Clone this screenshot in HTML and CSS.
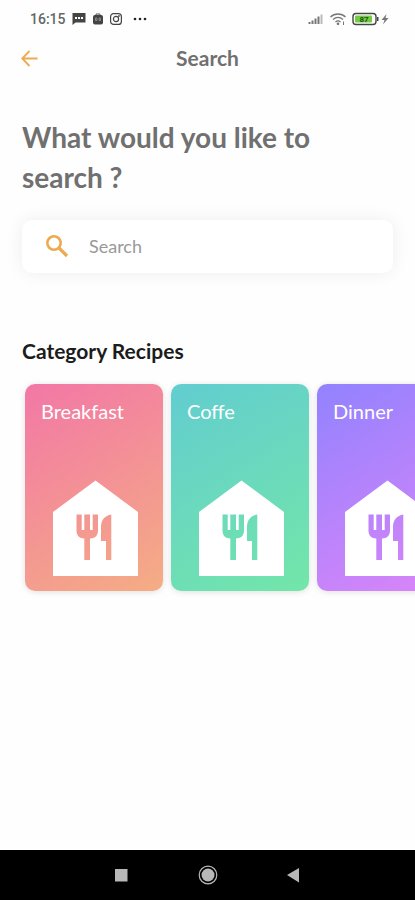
FILE: index.html
```html
<!DOCTYPE html>
<html lang="en">
<head>
<meta charset="utf-8">
<meta name="viewport" content="width=device-width, initial-scale=1">
<title>Search</title>
<link rel="stylesheet" href="styles.css">
</head>
<body>
<svg class="defs" aria-hidden="true">
  <symbol id="house" viewBox="0 0 85 96">
    <path fill="#fff" fill-rule="evenodd" d="M42.500 0.500L85 32V96H0V32ZM23.500 34.500V50.500C23.500 55.500 26.500 58.500 31.300 58.500V80H37V58.500C42 58.500 45 55.500 45 50.500V34.500H39.700V50H37V34.500H31.300V50H28.700V34.500ZM58.300 34.500C52 35.500 48 40 48 47V61H53V80H58.300Z"/>
  </symbol>
</svg>
<div class="status">
  <div class="status-group">
    <span class="time">16:15</span>
    <svg width="14" height="14" viewBox="0 0 14 14"><path fill="#444" d="M0.500 1H13.500V10.500H3.500L0.500 13Z"/><path fill="#fff" d="M3 5h2v2H3zM6 5h2v2H6zM9 5h2v2H9z"/></svg>
    <svg width="12" height="14" viewBox="0 0 12 14"><path d="M4 4V2H8V4" fill="none" stroke="#555"/><rect x="1" y="3" width="10" height="9.500" rx="2" fill="#444"/><path d="M3.500 6H5V8.500H3.500ZM7 6H8.500V8.500H7Z" fill="none" stroke="#999" stroke-width=".8"/></svg>
    <svg width="12" height="14" viewBox="0 0 12 14" fill="none" stroke="#444" stroke-width="1.200"><rect x="0.600" y="1.600" width="10.800" height="10.800" rx="3"/><circle cx="6" cy="7" r="2.600"/><circle cx="9" cy="4" r=".3"/></svg>
    <svg class="more" width="16" height="14" viewBox="0 0 16 14" fill="#222"><circle cx="3" cy="7" r="1.300"/><circle cx="8" cy="7" r="1.300"/><circle cx="13" cy="7" r="1.300"/></svg>
  </div>
  <div class="status-group">
    <svg width="16" height="14" viewBox="0 0 16 14" fill="#777"><path d="M0.500 10h2v2h-2zM3.500 8.500h2V12h-2zM6.500 6.500h2V12h-2zM9.500 4.500h2V12h-2z"/><path fill="#bbb" d="M12.500 2.500h2V12h-2z"/></svg>
    <svg width="16" height="14" viewBox="0 0 16 14" fill="none" stroke="#777" stroke-width="1.300"><path d="M0.500 5C4.500 1 11.500 1 15.500 5M3 7.500C6 4.800 10 4.800 13 7.500M5.500 10C7 8.700 9 8.700 10.500 10"/><circle cx="8" cy="11.800" r=".7"/><path d="M13.500 9.500V13" stroke-width="1"/></svg>
    <svg width="27" height="14" viewBox="0 0 27 14"><rect x="1" y="1.500" width="23" height="11" rx="3" fill="#fff" stroke="#444" stroke-width="1.400"/><rect x="3" y="3.500" width="17" height="7" rx="1" fill="#72cc42"/><path fill="#444" d="M25 5h1.500v4H25z"/><text class="charge" x="12" y="10" text-anchor="middle">87</text></svg>
    <svg class="bolt" width="8" height="14" viewBox="0 0 8 14"><path fill="#777" d="M5.500 2L0.500 8H3.500L2 12.500L7.500 6H4.500Z"/></svg>
  </div>
</div>
<header class="appbar">
  <button class="back" aria-label="Back"><svg width="17" height="18" viewBox="0 0 17 18" fill="none" stroke="#edaa50" stroke-width="1.800"><path d="M8.500 2L1.200 9.500L8.500 17M1.200 9.500H16.500"/></svg></button>
  <h2 class="title">Search</h2>
</header>
<main>
  <h1 class="question">What would you like to search ?</h1>
  <label class="search">
    <svg width="24" height="24" viewBox="0 0 24 24" fill="none" stroke="#edaa50" stroke-width="2.600"><circle cx="9" cy="9" r="6.700"/><path d="M14 14L22 22" stroke-width="3.200"/></svg>
    <input type="search" placeholder="Search" aria-label="Search">
  </label>
  <h2 class="section">Category Recipes</h2>
  <div class="cards">
    <a class="card breakfast" href="#breakfast"><span>Breakfast</span><svg class="house" aria-hidden="true"><use href="#house"/></svg></a>
    <a class="card coffee" href="#coffe"><span>Coffe</span><svg class="house" aria-hidden="true"><use href="#house"/></svg></a>
    <a class="card dinner" href="#dinner"><span>Dinner</span><svg class="house" aria-hidden="true"><use href="#house"/></svg></a>
  </div>
</main>
<nav class="system">
  <button aria-label="Recent apps"><svg width="20" height="20" viewBox="0 0 20 20"><rect x="4" y="4" width="12.500" height="12.500" fill="#b8b8b8"/></svg></button>
  <button aria-label="Home"><svg width="20" height="20" viewBox="0 0 20 20"><circle cx="10" cy="10" r="8.800" fill="none" stroke="#b8b8b8" stroke-width="1.200"/><circle cx="10" cy="10" r="6.500" fill="#b8b8b8"/></svg></button>
  <button aria-label="Go back"><svg width="20" height="20" viewBox="0 0 20 20"><path d="M15 3V17.500L3 10Z" fill="#b8b8b8"/></svg></button>
</nav>
</body>
</html>
```
FILE: styles.css
```css
* { box-sizing: border-box; }
body {
  margin: 0;
  min-height: 100vh;
  display: flex;
  flex-direction: column;
  background: #fefefe;
  color: #707070;
  font-family: Lato, "Liberation Sans", sans-serif;
  overflow-x: hidden;
}
h1, h2 { margin: 0; }
button { padding: 0; border: 0; background: none; display: flex; }
.defs { display: none; }
.status {
  height: 38px;
  padding: 0 26px 0 30px;
  display: flex;
  align-items: center;
  justify-content: space-between;
}
.status-group { display: flex; align-items: center; gap: 6px; }
.status-group svg { flex: none; }
.time { font: 500 14px/16px Roboto, sans-serif; color: #666; }
.more { margin-left: 4px; }
.bolt { margin-left: -4px; }
.charge { font: 700 8px Roboto, sans-serif; fill: #23501a; }
.appbar {
  height: 39px;
  padding: 0 21px;
  display: grid;
  grid-template-columns: 1fr auto 1fr;
  align-items: center;
}
.title { font-size: 21px; line-height: 24px; font-weight: 700; }
main { flex: 1; padding: 40px 0 24px; }
.question {
  padding: 0 22px;
  font-size: 28px;
  line-height: 40px;
  font-weight: 700;
}
.search {
  margin: 23px 22px 0;
  height: 53px;
  padding: 0 23px 2px;
  display: flex;
  align-items: center;
  gap: 20px;
  border-radius: 10px;
  background: #fff;
  box-shadow: 0 0 18px rgba(0, 0, 0, 0.07);
}
.search svg { flex: none; }
.search input {
  flex: 1;
  min-width: 0;
  padding: 0;
  border: 0;
  outline: 0;
  background: none;
  font: 400 18px/24px Lato, sans-serif;
  color: #707070;
}
.search input::placeholder { color: #999; opacity: 1; }
.section {
  margin-top: 66px;
  padding: 0 22px;
  font-size: 21px;
  line-height: 24px;
  font-weight: 700;
  color: #1c1c1c;
}
.cards {
  display: flex;
  gap: 8px;
  padding: 21px 25px 16px;
  overflow-x: auto;
  scrollbar-width: none;
}
.card {
  flex: none;
  width: 138px;
  height: 207px;
  padding: 15px 16px;
  display: flex;
  flex-direction: column;
  justify-content: space-between;
  border-radius: 10px;
  color: #fff;
  font-size: 20px;
  line-height: 24px;
  text-decoration: none;
  box-shadow: 0 1px 6px rgba(0, 0, 0, 0.12);
}
.house { width: 85px; height: 96px; margin-left: 12px; }
.breakfast { background: linear-gradient(150deg, #f277a6, #f5ad84); }
.coffee { background: linear-gradient(150deg, #62cdd0, #73e6a9); }
.dinner { background: linear-gradient(150deg, #9282ff, #dc85f8); }
.system {
  height: 50px;
  display: flex;
  align-items: center;
  justify-content: center;
  gap: 16%;
  background: #000;
}
```
